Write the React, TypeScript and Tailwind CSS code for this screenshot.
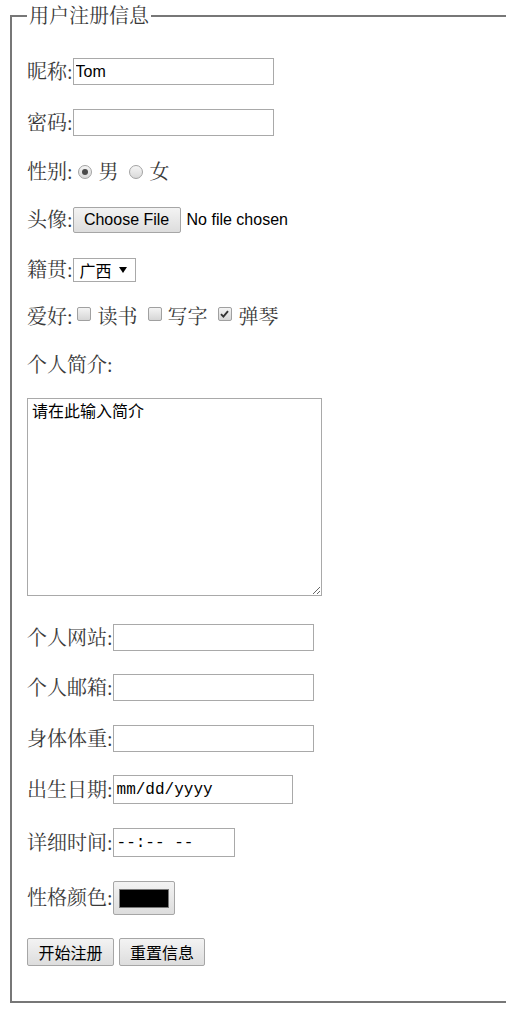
import React from "react";

const labelFont = {
  fontFamily: '"Liberation Serif", "Noto Serif CJK SC", "Noto Sans CJK SC", serif',
};

function Label({ children }: { children: React.ReactNode }) {
  return <span className="text-[20px] leading-[20px] text-[#3a3a3a] whitespace-nowrap">{children}</span>;
}

function Radio({ checked, className }: { checked?: boolean; className?: string }) {
  return (
    <span
      className={
        "inline-flex items-center justify-center w-[14px] h-[14px] shrink-0 rounded-full border border-[#a3a3a3] bg-gradient-to-b from-[#f6f6f6] to-[#d9d9d9] " +
        (className ?? "")
      }
    >
      {checked && <span className="w-[6px] h-[6px] rounded-full bg-[#4a4a4a]" />}
    </span>
  );
}

function Checkbox({ checked, className }: { checked?: boolean; className?: string }) {
  return (
    <span
      className={
        "inline-flex items-center justify-center w-[14px] h-[14px] shrink-0 rounded-[2px] border border-[#a0a0a0] bg-gradient-to-b from-[#f4f4f4] to-[#d6d6d6] mb-[5px] " +
        (className ?? "")
      }
    >
      {checked && (
        <svg width="9" height="8" viewBox="0 0 9 8">
          <path d="M1 4.2 L3.4 6.6 L8 1.2" stroke="#333" strokeWidth="1.9" fill="none" />
        </svg>
      )}
    </span>
  );
}

function TextBox({ value, w }: { value?: string; w: string }) {
  return (
    <input
      type="text"
      readOnly
      value={value ?? ""}
      className={
        "h-[27px] border border-[#a9a9a9] bg-white px-[2px] text-[16px] text-black outline-none " + w
      }
      style={{ fontFamily: '"Liberation Sans", Arial, sans-serif' }}
    />
  );
}

export default function App() {
  return (
    <div className="w-[506px] h-[1022px] overflow-hidden bg-white pt-[6px] pl-[10px]" style={labelFont}>
      <fieldset className="w-[620px] border-2 border-[#777777] px-[15px] pb-[35px] m-0">
        <legend className="px-[2px] text-[20px] leading-[20px] text-[#3a3a3a]">用户注册信息</legend>
        <div className="flex flex-col">
          <div className="mt-[32px] h-[27px] flex items-center">
            <Label>昵称:</Label>
            <TextBox value="Tom" w="w-[201px]" />
          </div>
          <div className="mt-[24px] h-[27px] flex items-center">
            <Label>密码:</Label>
            <TextBox w="w-[201px]" />
          </div>
          <div className="mt-[22px] h-[27px] flex items-center">
            <Label>性别:</Label>
            <Radio checked className="ml-[5px] mr-[7px]" />
            <Label>男</Label>
            <Radio className="ml-[10px] mr-[7px]" />
            <Label>女</Label>
          </div>
          <div className="mt-[22px] h-[26px] flex items-center">
            <Label>头像:</Label>
            <button
              type="button"
              className="h-[26px] w-[108px] rounded-[2px] border border-[#a6a6a6] bg-gradient-to-b from-[#f3f3f3] to-[#dddddd] text-[16px] leading-[20px] text-black"
              style={{ fontFamily: '"Liberation Sans", Arial, sans-serif' }}
            >
              Choose File
            </button>
            <span
              className="ml-[6px] text-[16px] leading-[20px] text-black"
              style={{ fontFamily: '"Liberation Sans", Arial, sans-serif' }}
            >
              No file chosen
            </span>
          </div>
          <div className="mt-[25px] h-[24px] flex items-center">
            <Label>籍贯:</Label>
            <div
              className="h-[24px] w-[63px] flex items-center border border-[#a9a9a9] bg-white pl-[6px] text-[16px] leading-[18px] text-black"
              style={{ fontFamily: '"Noto Sans CJK SC", sans-serif' }}
            >
              <span>广西</span>
              <svg className="ml-[7px]" width="8" height="6" viewBox="0 0 8 6">
                <path d="M0 0 H8 L4 6 Z" fill="#000" />
              </svg>
            </div>
          </div>
          <div className="mt-[21px] h-[27px] flex items-center">
            <Label>爱好:</Label>
            <Checkbox className="ml-[4px] mr-[7px]" />
            <Label>读书</Label>
            <Checkbox className="ml-[10px] mr-[6px]" />
            <Label>写字</Label>
            <Checkbox checked className="ml-[10px] mr-[7px]" />
            <Label>弹琴</Label>
          </div>
          <div className="mt-[21px] h-[27px] flex items-center">
            <Label>个人简介:</Label>
          </div>
          <textarea
            readOnly
            defaultValue="请在此输入简介"
            className="mt-[20px] h-[198px] w-[295px] border border-[#a9a9a9] bg-white px-[4px] pt-[2px] text-[16px] leading-[18px] text-black outline-none"
            style={{ fontFamily: '"Noto Sans CJK SC", sans-serif' }}
          />
          <div className="mt-[28px] h-[27px] flex items-center">
            <Label>个人网站:</Label>
            <TextBox w="w-[201px]" />
          </div>
          <div className="mt-[23px] h-[27px] flex items-center">
            <Label>个人邮箱:</Label>
            <TextBox w="w-[201px]" />
          </div>
          <div className="mt-[24px] h-[27px] flex items-center">
            <Label>身体体重:</Label>
            <TextBox w="w-[201px]" />
          </div>
          <div className="mt-[23px] h-[29px] flex items-center">
            <Label>出生日期:</Label>
            <div
              className="h-[29px] w-[180px] flex items-center border border-[#a9a9a9] bg-white pl-[3px] text-[16px] text-black"
              style={{ fontFamily: '"Liberation Mono", "DejaVu Sans Mono", monospace' }}
            >
              mm/dd/yyyy
            </div>
          </div>
          <div className="mt-[24px] h-[29px] flex items-center">
            <Label>详细时间:</Label>
            <div
              className="h-[29px] w-[122px] flex items-center border border-[#a9a9a9] bg-white pl-[3px] text-[16px] text-black whitespace-pre"
              style={{ fontFamily: '"Liberation Mono", "DejaVu Sans Mono", monospace' }}
            >
              {"--:-- --"}
            </div>
          </div>
          <div className="mt-[24px] h-[34px] flex items-center">
            <Label>性格颜色:</Label>
            <div className="h-[34px] w-[62px] flex items-center justify-center rounded-[2px] border border-[#a6a6a6] bg-gradient-to-b from-[#f3f3f3] to-[#dddddd]">
              <div className="h-[19px] w-[50px] border border-[#777777] bg-black" />
            </div>
          </div>
          <div className="mt-[23px] h-[28px] flex items-center gap-[5px]">
            <button
              type="button"
              className="h-[28px] w-[87px] rounded-[2px] border border-[#a6a6a6] bg-gradient-to-b from-[#f3f3f3] to-[#dddddd] text-[16px] leading-[20px] text-black"
              style={{ fontFamily: '"Noto Sans CJK SC", sans-serif' }}
            >
              开始注册
            </button>
            <button
              type="button"
              className="h-[28px] w-[86px] rounded-[2px] border border-[#a6a6a6] bg-gradient-to-b from-[#f3f3f3] to-[#dddddd] text-[16px] leading-[20px] text-black"
              style={{ fontFamily: '"Noto Sans CJK SC", sans-serif' }}
            >
              重置信息
            </button>
          </div>
        </div>
      </fieldset>
    </div>
  );
}
